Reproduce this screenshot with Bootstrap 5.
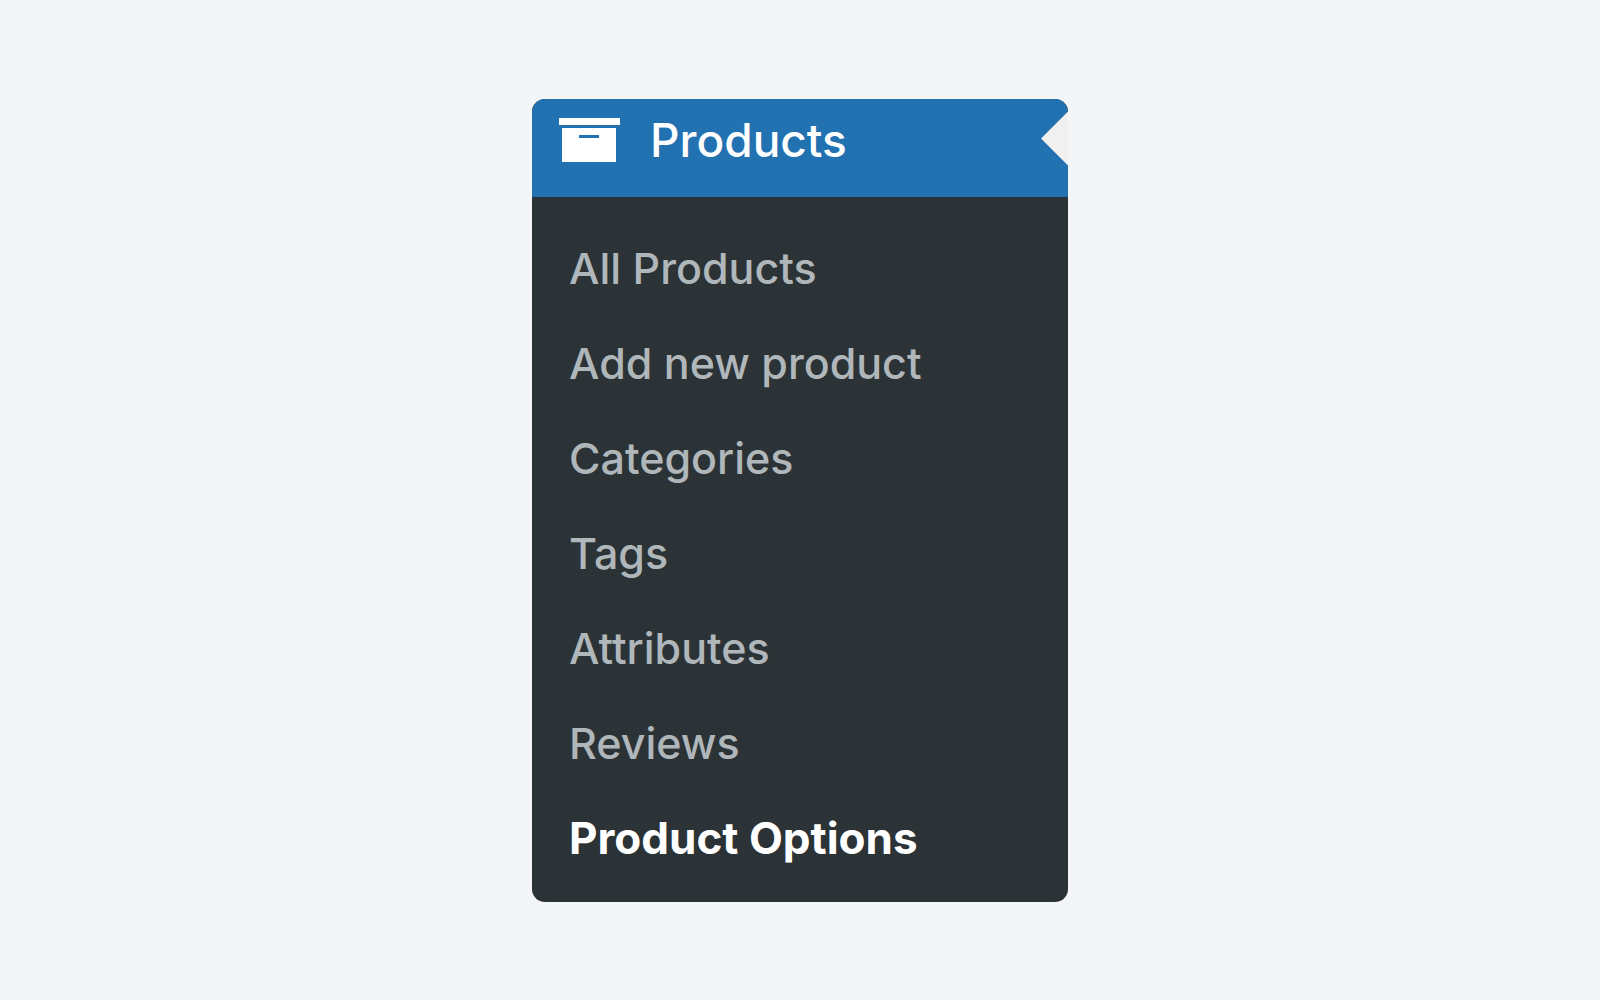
<!DOCTYPE html>
<html lang="en">
<head>
<meta charset="utf-8">
<meta name="viewport" content="width=device-width, initial-scale=1">
<title>Products</title>
<link href="https://cdn.jsdelivr.net/npm/bootstrap@5.3.0/dist/css/bootstrap.min.css" rel="stylesheet">
<style>
body { background: #f3f5f7; font-family: Inter, "Liberation Sans", sans-serif; }
.admin-menu { width: 100%; max-width: 536px; background: #2c3337; border-radius: 13px; }
.menu-head { height: 98px; padding: 0 27px 15px; gap: 30px; background: #2271b1; color: #fff; font-size: 46px; font-weight: 500; line-height: 56px; }
.menu-head:hover { color: #fff; }
.menu-arrow { top: 13px; right: 0; width: 27px; height: 54px; background: #f0f0f1; clip-path: polygon(100% 0, 100% 100%, 0 50%); }
.submenu { padding: 24px 37px 16px; }
.submenu .nav-link { padding: 0; color: #b0b7bb; font-size: 43px; font-weight: 500; line-height: 95px; }
.submenu .nav-link.active { color: #fff; font-size: 44px; font-weight: 700; }
</style>
</head>
<body class="min-vh-100 d-flex align-items-center justify-content-center">
<nav class="admin-menu overflow-hidden" aria-label="Products menu">
  <a href="#" class="menu-head d-flex align-items-center text-decoration-none position-relative">
    <svg width="61" height="44" viewBox="0 0 61 44" fill="#fff" aria-hidden="true"><path d="M0 0h61v7H0z"/><path fill-rule="evenodd" d="M3 10h54v34H3zM20 17v3h20v-3z"/></svg>
    <span>Products</span>
    <span class="menu-arrow position-absolute"></span>
  </a>
  <ul class="submenu nav flex-column">
    <li class="nav-item"><a class="nav-link" href="#">All Products</a></li>
    <li class="nav-item"><a class="nav-link" href="#">Add new product</a></li>
    <li class="nav-item"><a class="nav-link" href="#">Categories</a></li>
    <li class="nav-item"><a class="nav-link" href="#">Tags</a></li>
    <li class="nav-item"><a class="nav-link" href="#">Attributes</a></li>
    <li class="nav-item"><a class="nav-link" href="#">Reviews</a></li>
    <li class="nav-item"><a class="nav-link active" aria-current="page" href="#">Product Options</a></li>
  </ul>
</nav>
<script src="https://cdn.jsdelivr.net/npm/bootstrap@5.3.0/dist/js/bootstrap.bundle.min.js"></script>
</body>
</html>
